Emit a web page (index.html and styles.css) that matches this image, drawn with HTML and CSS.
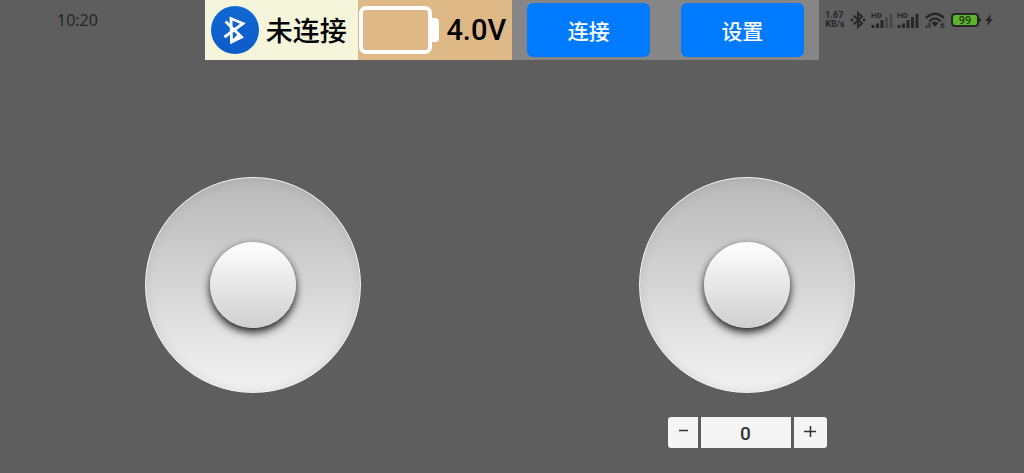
FILE: index.html
```html
<!DOCTYPE html>
<html lang="zh-CN">
<head>
<meta charset="utf-8">
<title>遥控器</title>
<meta name="viewport" content="width=device-width, initial-scale=1">
<link rel="stylesheet" href="styles.css">
</head>
<body>
<header class="top">
  <div class="clock">10:20</div>
  <div class="toolbar">
    <div class="cell link-state">
      <svg class="bt-logo" viewBox="0 0 48 48" aria-hidden="true">
        <defs><linearGradient id="blue" x1="0" y1="0" x2="0" y2="1"><stop offset="0" stop-color="#1168d2"/><stop offset="1" stop-color="#0c5bc8"/></linearGradient></defs>
        <circle cx="24" cy="24" r="24" fill="url(#blue)"/>
        <path d="M14.500 15.500L30.500 31L20.500 36L20 12.500L32 17.500L13.500 31" fill="none" stroke="#fff" stroke-width="2.800"/>
        <path d="M20 37l12-5-5-4-6 6z" fill="#fff"/>
      </svg>
      <span>未连接</span>
    </div>
    <div class="cell voltage">
      <svg class="cell-battery" viewBox="0 0 81 48" aria-hidden="true">
        <rect x="3" y="2" width="69" height="44" rx="5" fill="none" stroke="#fff" stroke-width="4"/>
        <path d="M73 12h4q4 0 4 4v16q0 4-4 4h-4z" fill="#fff"/>
      </svg>
      <span>4.0V</span>
    </div>
    <div class="cell action"><button class="btn" type="button">连接</button></div>
    <div class="cell action"><button class="btn" type="button">设置</button></div>
  </div>
  <div class="status">
    <div class="speed"><span>1.67</span><span>KB/s</span></div>
    <svg class="ico-bt" viewBox="0 0 16 18" aria-hidden="true"><path d="M3.500 4.500L12 12.500L8 16V2L12 5.500L3.500 13.500" fill="none" stroke="#272727" stroke-width="2"/><circle cx="2" cy="9" r="1.400" fill="#272727"/><circle cx="14" cy="9" r="1.400" fill="#272727"/></svg>
    <svg class="ico-signal" viewBox="0 0 22 16" aria-hidden="true"><text x="0" y="6" class="hd">HD</text><path d="M2 13v3M6.500 11.500v4.500M11 8v8" stroke="#272727" stroke-width="3"/><path d="M15.500 5v11M20 2v14" stroke="#484848" stroke-width="3"/></svg>
    <svg class="ico-signal" viewBox="0 0 22 16" aria-hidden="true"><text x="0" y="6" class="hd">HD</text><path d="M2 13v3M6.500 11.500v4.500M11 8v8M15.500 5v11M20 2v14" stroke="#272727" stroke-width="3"/></svg>
    <svg class="ico-wifi" viewBox="0 0 20 16" aria-hidden="true"><path d="M1 6Q10-2.500 19 6M4 9.500Q10 3.500 16 9.500" fill="none" stroke="#272727" stroke-width="2.200"/><path d="M6.500 11Q10 8 13.500 11L10 15z" fill="#272727"/><path d="M1.500 13v3M4.500 11v5" stroke="#272727" stroke-width="1.500"/><text x="15" y="16" class="hd">6</text></svg>
    <svg class="ico-charge" viewBox="0 0 30 14" aria-hidden="true"><rect x="1" y="1" width="26" height="12" rx="3" fill="#5cb52c" stroke="#272727" stroke-width="2"/><path d="M28 5q2 0 2 2t-2 2z" fill="#272727"/><text x="14" y="11" class="pct">99</text></svg>
    <svg class="ico-bolt" viewBox="0 0 8 12" aria-hidden="true"><path d="M6 0L0 7h3L2 12L8 5H5z" fill="#272727"/></svg>
  </div>
</header>
<main class="pads">
  <section class="pad">
    <div class="stick"><div class="knob"></div></div>
  </section>
  <section class="pad">
    <div class="stick"><div class="knob"></div></div>
    <div class="stepper">
      <button class="step minus" type="button" aria-label="减少"><svg class="sign" viewBox="0 0 12 12" aria-hidden="true"><path d="M2 5.500h9" stroke="#333" stroke-width="1.500"/></svg></button>
      <input class="amount" type="text" inputmode="numeric" value="0" aria-label="数值">
      <button class="step plus" type="button" aria-label="增加"><svg class="sign" viewBox="0 0 12 12" aria-hidden="true"><path d="M0 6.500h12M6.500 1v11" stroke="#333" stroke-width="1.500"/></svg></button>
    </div>
  </section>
</main>
</body>
</html>
```
FILE: styles.css
```css
* { box-sizing: border-box; }
body {
  margin: 0;
  min-height: 100vh;
  background: #5e5e5e;
  color: #000;
  font-family: "Noto Sans", "Noto Sans CJK SC", sans-serif;
}
.top { display: grid; grid-template-columns: 1fr 60% 1fr; }
.clock {
  padding: 8px 0 0 57px;
  font-size: 16px;
  line-height: 24px;
  color: #272727;
}
.toolbar { display: grid; grid-template-columns: repeat(4, 1fr); background: #868686; }
.cell {
  display: flex;
  align-items: center;
  height: 60px;
  font-family: "Noto Sans CJK SC", sans-serif;
  font-size: 27px;
  font-weight: 500;
  line-height: 40px;
  white-space: nowrap;
}
.link-state { gap: 7px; padding-left: 6px; background: #f5f5dc; }
.voltage { gap: 7px; background: #deb887; font-family: Roboto, sans-serif; font-size: 29px; }
.bt-logo { flex: none; width: 48px; height: 48px; }
.cell-battery { flex: none; width: 81px; height: 48px; }
.action { justify-content: center; }
.btn {
  width: 80%;
  height: 54px;
  padding: 0;
  border: 0;
  border-radius: 6px;
  background: #007aff;
  color: #fff;
  font-family: inherit;
  font-size: 21px;
  font-weight: 500;
}
.status { display: flex; align-items: center; height: 40px; padding-left: 6px; color: #272727; }
.speed {
  display: flex;
  flex-direction: column;
  width: 25px;
  font-family: Roboto, sans-serif;
  font-size: 9px;
  line-height: 9px;
  font-weight: 700;
}
.status svg { flex: none; overflow: visible; }
.ico-bt { width: 16px; height: 18px; margin-right: 5px; }
.ico-signal { width: 22px; height: 16px; margin-right: 4px; }
.ico-wifi { width: 20px; height: 16px; margin: 0 6px 0 2px; }
.ico-charge { width: 30px; height: 14px; margin-right: 4px; }
.ico-bolt { width: 8px; height: 12px; }
.hd { font: 700 8px Roboto, sans-serif; fill: #272727; }
.pct { font: 500 11px Roboto, sans-serif; fill: #20380f; text-anchor: middle; }
.pads { display: grid; grid-template-columns: 1fr 1fr; padding: 117px 30px 0 6px; }
.pad { display: flex; flex-direction: column; align-items: center; gap: 24px; }
.stick {
  display: flex;
  align-items: center;
  justify-content: center;
  width: 216px;
  height: 216px;
  border: 1px solid #f4f4f4;
  border-radius: 50%;
  background: linear-gradient(#b8b8b8, #f3f3f3);
  box-shadow: inset 0 0 10px rgba(90, 90, 90, .16);
}
.knob {
  width: 86px;
  height: 86px;
  border-radius: 50%;
  background: linear-gradient(#fff, #cfcfcf);
  box-shadow: 0 4px 8px rgba(0, 0, 0, .9);
}
.stepper { display: flex; gap: 3px; }
.step {
  display: flex;
  align-items: center;
  justify-content: center;
  height: 31px;
  padding: 0 0 3px;
  border: 0;
  background: #f5f5f5;
}
.minus { width: 30px; border-radius: 3px 0 0 3px; }
.plus { width: 33px; border-radius: 0 3px 3px 0; }
.sign { width: 12px; height: 12px; }
.amount {
  width: 90px;
  height: 31px;
  padding: 1px 0 0;
  border: 0;
  background: #f5f5f5;
  color: #333;
  font: 500 19px Roboto, sans-serif;
  text-align: center;
}
```
